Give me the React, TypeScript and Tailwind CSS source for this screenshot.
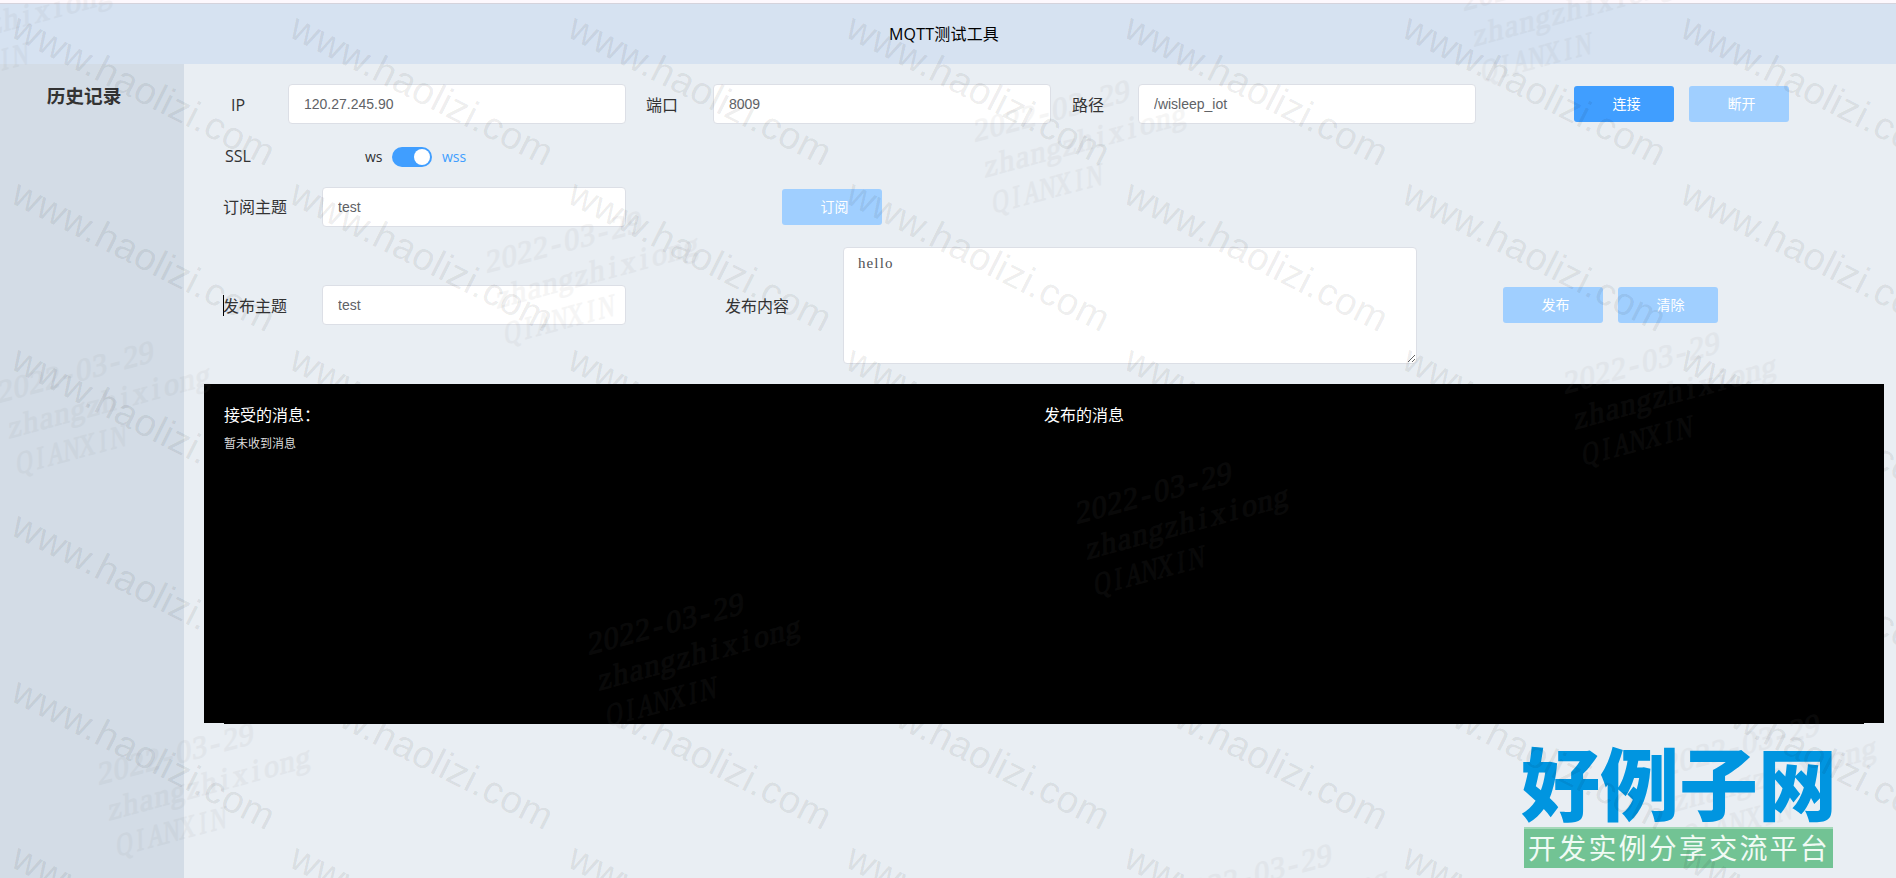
import React from "react";

const CJK = "font-['Open_Sans','Noto_Sans_CJK_SC',sans-serif]";

function Field({ value, className }: { value: string; className: string }) {
  return (
    <input
      defaultValue={value}
      className={`h-10 rounded border border-[#dcdfe6] bg-white px-[15px] font-['Liberation_Sans','Noto_Sans_CJK_SC',sans-serif] text-sm text-[#606266] outline-none ${className}`}
    />
  );
}

function Button({ label, active = false, className = "" }: { label: string; active?: boolean; className?: string }) {
  return (
    <button
      className={`h-9 w-[100px] shrink-0 rounded-[3px] pb-px pl-[5px] text-sm leading-[35px] text-white ${active ? "bg-[#409eff]" : "bg-[#a0cfff]"} ${className}`}
    >
      {label}
    </button>
  );
}

function Label({ text, className = "" }: { text: string; className?: string }) {
  return <span className={`shrink-0 whitespace-nowrap text-base leading-6 text-[#333] ${className}`}>{text}</span>;
}

const cols = [0, 1, 2, 3, 4, 5, 6];
const rows = [0, 1, 2, 3, 4, 5];

function SiteMark() {
  return (
    <svg className="pointer-events-none absolute inset-0" width="1896" height="878">
      {rows.map((r) =>
        cols.map((c) => (
          <text
            key={`${r}-${c}`}
            transform={`translate(${9 + c * 278.2} ${36 + r * 166}) rotate(26.9)`}
            textLength="289"
            fontFamily="Liberation Sans, sans-serif"
            fontSize="38.5"
            fill="#000"
            fillOpacity="0.08"
          >
            www.haolizi.com
          </text>
        )),
      )}
    </svg>
  );
}

const stamps = [
  [-100, 21],
  [1463, 11],
  [974, 142],
  [486, 273],
  [-2, 403],
  [1564, 394],
  [1076, 524],
  [588, 655],
  [98, 785],
  [1664, 776],
  [1176, 906],
];

function cells(text: string, scale: number) {
  return text
    .split("")
    .map((_, i) => (8 + i * 16.2) / scale)
    .join(" ");
}

function UserStamps() {
  return (
    <svg
      className="pointer-events-none absolute inset-0"
      width="1896"
      height="878"
      fontFamily="Liberation Serif, serif"
      fontSize="31"
      fill="#808080"
      stroke="#808080"
      strokeWidth="1"
      textAnchor="middle"
    >
      {stamps.map(([x, y]) => (
        <g key={`${x}-${y}`} opacity="0.07" transform={`translate(${x} ${y}) rotate(-15)`}>
          <g transform="skewX(-14)">
            <text x={cells("2022-03-29", 1)}>2022-03-29</text>
          </g>
          <g transform="translate(0 37) skewX(-14)">
            <text x={cells("zhangzhixiong", 1)}>zhangzhixiong</text>
          </g>
          <g transform="translate(0 74) skewX(-14) scale(0.75 1)">
            <text x={cells("QIANXIN", 0.75)}>QIANXIN</text>
          </g>
        </g>
      ))}
    </svg>
  );
}

export default function App() {
  return (
    <div className={`relative h-[878px] w-[1896px] overflow-hidden bg-[#fdf8fd] ${CJK}`}>
      <div className="-ml-4 flex h-full w-[1920px] flex-col pt-[3px]">
        <header className="flex h-[61px] shrink-0 items-center justify-center border-t border-[#d5d3dc] bg-[#d6e2f1] text-base tracking-[0.2px] text-black">
          MQTT测试工具
        </header>

        <div className="flex min-h-0 flex-1">
          <aside className="w-[200px] shrink-0 bg-[#d3dce6] pt-4 text-center text-[18.7px] font-bold leading-8 text-[#333]">
            历史记录
          </aside>

          <main className="w-[1720px] bg-[#e9eef3] p-5">
            <div className="flex h-10 items-center">
              <Label text="IP" className="w-[84px] pl-[27px] pt-0.5" />
              <Field value="120.27.245.90" className="w-[338px]" />
              <Label text="端口" className="w-[87px] pl-5 pt-0.5" />
              <Field value="8009" className="w-[338px]" />
              <Label text="路径" className="w-[87px] pl-[21px] pt-0.5" />
              <Field value="/wisleep_iot" className="w-[338px]" />
              <Button label="连接" active className="ml-[98px]" />
              <Button label="断开" className="ml-[15px]" />
            </div>

            <div className="mt-[21px] flex h-[23px] items-center">
              <Label text="SSL" className="w-[161px] pb-0.5 pl-[21px]" />
              <span className="w-[27px] pt-px text-sm text-[#303133]">ws</span>
              <span className="flex h-5 w-10 items-center justify-end rounded-full bg-[#409eff] px-0.5">
                <span className="size-4 rounded-full bg-white" />
              </span>
              <span className="pl-2.5 pt-px text-sm text-[#409eff]">wss</span>
            </div>

            <div className="mt-[19px] flex h-10 items-center">
              <Label text="订阅主题" className="w-[118px] pl-[19px]" />
              <Field value="test" className="w-[304px]" />
              <Button label="订阅" className="ml-[156px]" />
            </div>

            <div className="mt-5 flex h-[116px] items-center">
              <span className="ml-[19px] h-[21px] w-px shrink-0 bg-black" />
              <Label text="发布主题" className="-ml-px w-[99px] pt-0.5" />
              <Field value="test" className="w-[304px]" />
              <Label text="发布内容" className="w-[217px] pl-[99px] pt-0.5" />
              <textarea
                defaultValue="hello"
                className="h-[117px] w-[574px] resize self-start rounded border border-[#dcdfe6] bg-white px-3.5 py-[5px] font-['Liberation_Serif','Noto_Sans_CJK_SC',serif] text-[15px] leading-[21px] tracking-[1.1px] text-[#505256] outline-none"
              />
              <Button label="发布" className="ml-[86px]" />
              <Button label="清除" className="ml-[15px]" />
            </div>

            <section className="mt-[21px] h-[339px] bg-black px-5 text-base text-white">
              <div className="flex h-[340px] bg-black pt-[19px]">
                <div className="w-1/2">
                  <div className="leading-6">接受的消息：</div>
                  <div className="mt-[7px] text-xs leading-5 text-[#ddd]">暂未收到消息</div>
                </div>
                <div className="w-1/2 leading-6">发布的消息</div>
              </div>
            </section>
          </main>
        </div>
      </div>

      <UserStamps />

      <div className="absolute left-[1524px] top-[737px] w-[309px] font-['Noto_Sans_CJK_SC',sans-serif]">
        <div className="-ml-[3px] h-[90px] whitespace-nowrap text-[79px] font-black leading-[88px] text-[#0095e0]">
          好例子网
        </div>
        <div className="h-[41px] whitespace-nowrap border-t-2 border-[#a3d8b8] bg-[#72c394] pl-1 text-[28px] leading-[36px] tracking-[2.2px] text-[#f0faf4]">
          开发实例分享交流平台
        </div>
      </div>

      <SiteMark />
    </div>
  );
}
